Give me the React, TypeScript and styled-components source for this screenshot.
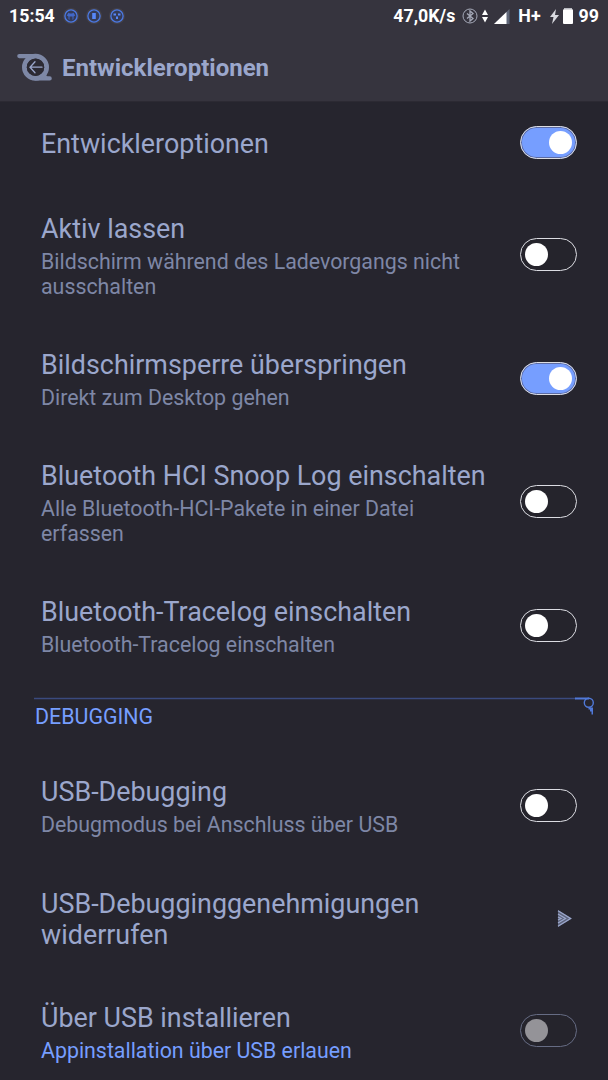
import React from 'react';
import styled, { createGlobalStyle } from 'styled-components';

const GlobalStyle = createGlobalStyle`
  * { box-sizing: border-box; }
  body { margin: 0; background: #26252e; font-family: Roboto, sans-serif; }
`;

const Screen = styled.div`
  width: 608px;
  height: 1080px;
  overflow: hidden;
  display: flex;
  flex-direction: column;
  background: #26252e;
`;

const Header = styled.header`
  flex: none;
  height: 102px;
  background: #36343e;
  border-bottom: 1px solid #2c2a33;
`;

const StatusBar = styled.div`
  height: 32px;
  padding: 0 9px 0 9px;
  display: flex;
  align-items: center;
  justify-content: space-between;
  color: #fff;
  font-size: 17.8px;
  font-weight: 700;
  line-height: 32px;
`;

const StatusGroup = styled.div`
  display: flex;
  align-items: center;
`;

const Notifications = styled.div`
  display: flex;
  gap: 7px;
  margin-left: 8px;
`;

const StatusIcon = styled.svg<{ $left?: number }>`
  display: block;
  flex: none;
  margin-left: ${(p) => p.$left ?? 0}px;
`;

const StatusText = styled.span<{ $left?: number }>`
  margin-left: ${(p) => p.$left ?? 0}px;
`;

const TitleBar = styled.div`
  height: 69px;
  padding-left: 17px;
  display: flex;
  align-items: center;
  gap: 10px;
`;

const BackIcon = styled.svg`
  display: block;
  margin-top: 1px;
`;

const PageTitle = styled.h1`
  margin: 0;
  padding-top: 3px;
  font-size: 24px;
  line-height: 32px;
  font-weight: 700;
  color: #9ba7cc;
`;

const Row = styled.div`
  flex: none;
  min-height: 84.75px;
  display: flex;
  align-items: center;
  justify-content: space-between;
  padding: 25.6px 31px 25.6px 41px;

  &:first-of-type {
    min-height: 86px;
    padding-bottom: 26.2px;
  }
`;

const Labels = styled.div`
  width: 450px;
`;

const RowTitle = styled.div`
  font-size: 26.88px;
  line-height: 31.5px;
  color: #9ba7cc;
`;

const RowSummary = styled.div<{ $accent?: boolean }>`
  width: 425px;
  margin-top: 3.5px;
  font-size: 21.35px;
  line-height: 25px;
  color: ${(p) => (p.$accent ? '#769eff' : '#7e87a6')};
`;

const Track = styled.div<{ $on?: boolean; $disabled?: boolean }>`
  width: 57px;
  height: 33px;
  margin-top: -3.5px;
  padding: 0 4px;
  border: 1px solid ${(p) => (p.$disabled ? '#666c84' : '#dcdde3')};
  border-radius: 17px;
  display: flex;
  align-items: center;
  justify-content: ${(p) => (p.$on ? 'flex-end' : 'flex-start')};
  background: ${(p) => (p.$on ? '#769eff' : '#25242c')};
  box-shadow: ${(p) => (p.$on ? 'inset 0 0 0 1px #5b6ba4' : 'none')};
`;

const Thumb = styled.div<{ $disabled?: boolean }>`
  width: 23px;
  height: 23px;
  border-radius: 50%;
  background: ${(p) => (p.$disabled ? '#949398' : '#fff')};
`;

const Section = styled.section`
  flex: none;
  height: 69px;
  padding: 14px 14px 0 34px;
`;

const Divider = styled.svg`
  display: block;
  margin-bottom: -11px;
`;

const SectionTitle = styled.h2`
  margin: 0 0 0 1px;
  font-size: 21.4px;
  line-height: 25px;
  font-weight: 400;
  color: #769eff;
`;

const Arrow = styled.svg`
  display: block;
  margin: 0 5px 3px 0;
`;

function Badge({ children }: { children: React.ReactNode }) {
  return (
    <StatusIcon width="16" height="16" viewBox="0 0 16 16">
      <circle cx="8" cy="8" r="8" fill="#444047" />
      <circle cx="8" cy="8" r="6.1" fill="#343b59" stroke="#4b79e4" strokeWidth="1.3" />
      {children}
    </StatusIcon>
  );
}

function Switch({ on, disabled }: { on?: boolean; disabled?: boolean }) {
  return (
    <Track $on={on} $disabled={disabled} role="switch" aria-checked={!!on}>
      <Thumb $disabled={disabled} />
    </Track>
  );
}

interface SettingProps {
  title: string;
  summary?: string;
  accent?: boolean;
  children: React.ReactNode;
}

function Setting({ title, summary, accent, children }: SettingProps) {
  return (
    <Row>
      <Labels>
        <RowTitle>{title}</RowTitle>
        {summary && <RowSummary $accent={accent}>{summary}</RowSummary>}
      </Labels>
      {children}
    </Row>
  );
}

export default function App() {
  return (
    <Screen>
      <GlobalStyle />
      <Header>
        <StatusBar>
          <StatusGroup>
            <StatusText>15:54</StatusText>
            <Notifications>
              <Badge>
                <path d="M3.800 7.500 5.500 4.800 7 5.500h2l1.500-.7 1.700 2.700-1.700 1V11L9.500 12V8.500h-3V12l-1-1V8.500z" fill="#4268c8" />
              </Badge>
              <Badge>
                <rect x="6.200" y="5" width="3.600" height="6" fill="#5687fa" />
              </Badge>
              <Badge>
                <path d="M4.500 5.500h2.500v2H4.500zM9 5.500h2.500v2H9zM7 8.500h2v2.500H7z" fill="#5687fa" />
              </Badge>
            </Notifications>
          </StatusGroup>
          <StatusGroup>
            <StatusText>47,0K/s</StatusText>
            <StatusIcon $left={7} width="16" height="16" viewBox="0 0 16 16" fill="none" stroke="#a5a9b8">
              <circle cx="8" cy="8" r="7" strokeWidth="1" />
              <path d="m5 5.500 6 5-3 2.500V3l3 2.500-6 5" strokeWidth="1.300" />
            </StatusIcon>
            <StatusIcon $left={4} width="6" height="14" viewBox="0 0 6 14" fill="#fff">
              <path d="M3 .5 6 6H0zM3 13.500 0 8h6z" />
            </StatusIcon>
            <StatusIcon $left={6} width="16" height="15" viewBox="0 0 16 15">
              <path d="M0 15 15.500 0v15z" fill="#5f6678" />
              <path d="M0 15 12.500 3v12z" fill="#fff" />
            </StatusIcon>
            <StatusText $left={8}>H+</StatusText>
            <StatusIcon $left={9} width="9" height="15" viewBox="0 0 9 15" fill="#d8d9df">
              <path d="M6 0 0 8h3.500L2 15 9 6H5z" />
            </StatusIcon>
            <StatusIcon $left={4} width="10" height="16" viewBox="0 0 10 16">
              <path d="M1 0h8v1.500H1z" fill="#b9bac1" />
              <rect y="1.300" width="10" height="14.700" rx="1" fill="#fff" />
            </StatusIcon>
            <StatusText $left={6}>99</StatusText>
          </StatusGroup>
        </StatusBar>
        <TitleBar>
          <BackIcon width="35" height="28" viewBox="0 0 35 28" fill="none" strokeLinecap="round">
            <path d="M2.300 3.100H18.500M18.500 25.400H32.700" stroke="#7e88a6" strokeWidth="4.200" />
            <path d="M30.500 19 29 22l2 2.500H22z" fill="#7e88a6" />
            <circle cx="18.500" cy="14.200" r="11.100" stroke="#7e88a6" strokeWidth="4.800" />
            <circle cx="18.500" cy="14.200" r="8.700" fill="#2c2a33" />
            <path d="M25 14.200H13M18 8.700l-5 5.500 5 5.500" stroke="#9ba7cc" strokeWidth="1.300" />
          </BackIcon>
          <PageTitle>Entwickleroptionen</PageTitle>
        </TitleBar>
      </Header>

      <Setting title="Entwickleroptionen"><Switch on /></Setting>
      <Setting title="Aktiv lassen" summary="Bildschirm während des Ladevorgangs nicht ausschalten"><Switch /></Setting>
      <Setting title="Bildschirmsperre überspringen" summary="Direkt zum Desktop gehen"><Switch on /></Setting>
      <Setting title="Bluetooth HCI Snoop Log einschalten" summary="Alle Bluetooth-HCI-Pakete in einer Datei erfassen"><Switch /></Setting>
      <Setting title="Bluetooth-Tracelog einschalten" summary="Bluetooth-Tracelog einschalten"><Switch /></Setting>

      <Section>
        <Divider width="560" height="18" viewBox="0 0 560 18" fill="none">
          <path d="M0 1.500h542" stroke="#3a4a7e" strokeWidth="1.400" />
          <path d="M541 1.500h14" stroke="#5079d8" strokeWidth="2" />
          <circle cx="554.800" cy="5.800" r="4.500" stroke="#5079d8" strokeWidth="1.400" />
          <path d="M554.500 10.500h4.500V17.500h-1.500V14.500H556V12.500H554.500z" fill="#5079d8" />
        </Divider>
        <SectionTitle>DEBUGGING</SectionTitle>
      </Section>

      <Setting title="USB-Debugging" summary="Debugmodus bei Anschluss über USB"><Switch /></Setting>
      <Setting title="USB-Debugginggenehmigungen widerrufen">
        <Arrow width="15" height="17" viewBox="0 0 15 17">
          <path d="M1 0 15 8.500 1 17z" fill="#5d647c" />
          <path d="M1 .8 13.500 8.500 1 16.200M1 4 8.500 8.500 1 13M1 7 4 8.500 1 10" fill="none" stroke="#9ba7cc" strokeWidth="1.300" />
        </Arrow>
      </Setting>
      <Setting title="Über USB installieren" summary="Appinstallation über USB erlauen" accent><Switch disabled /></Setting>
    </Screen>
  );
}
